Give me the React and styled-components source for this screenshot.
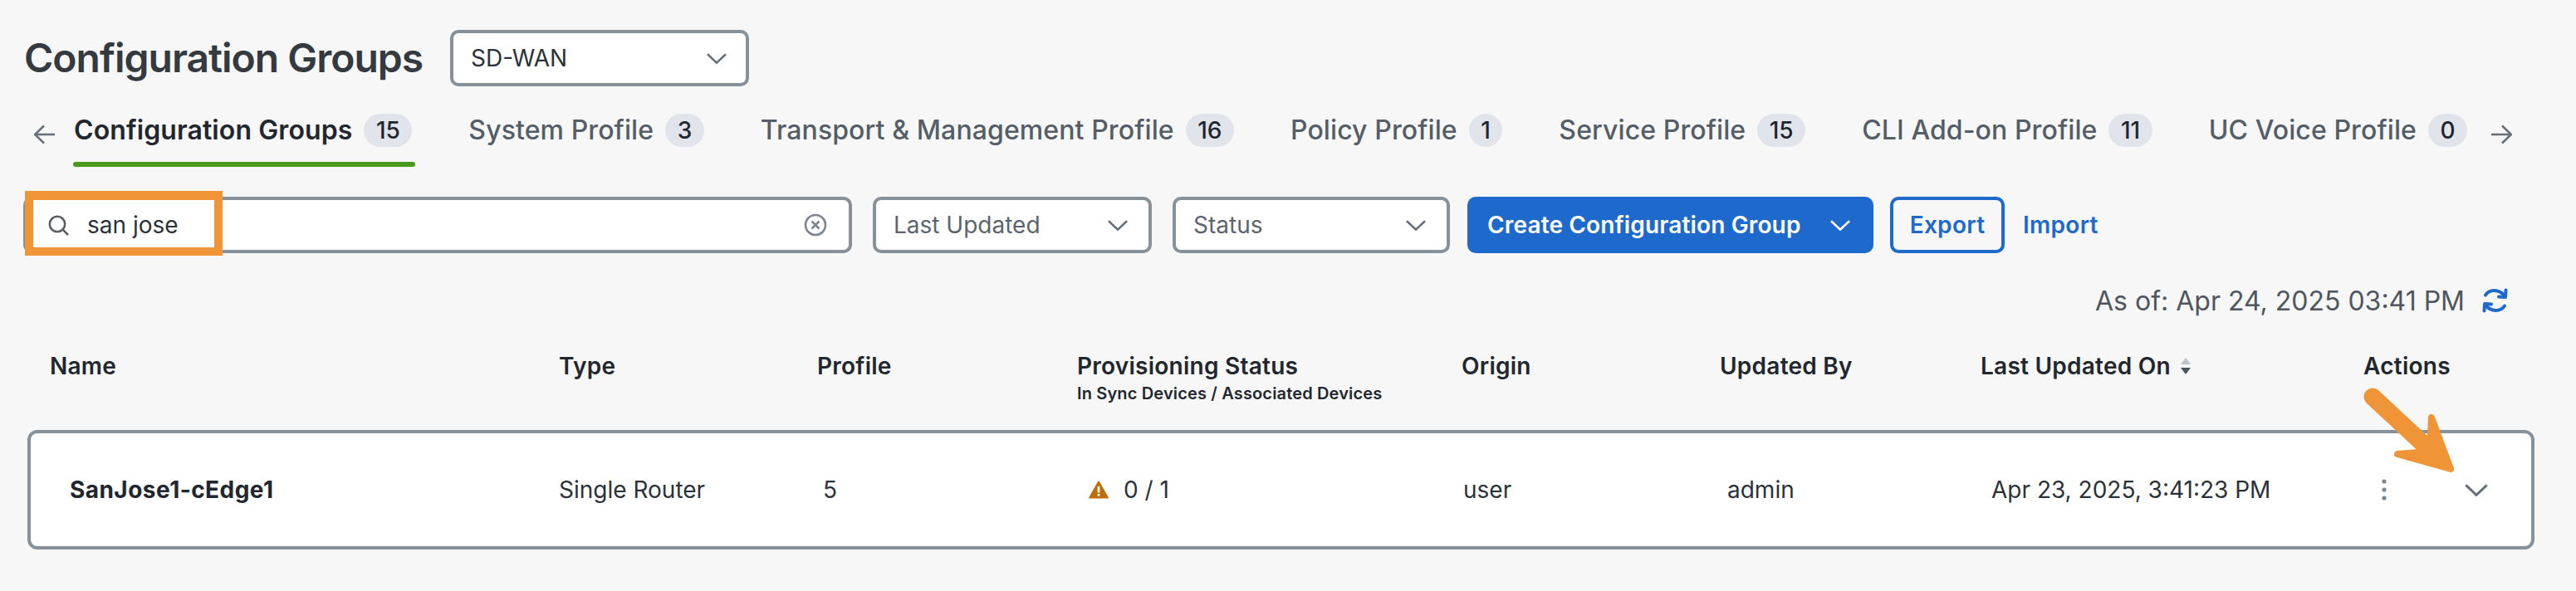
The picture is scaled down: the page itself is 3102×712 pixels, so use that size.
import React from 'react';
import styled, { createGlobalStyle } from 'styled-components';

const GlobalStyle = createGlobalStyle`
  html, body {
    margin: 0;
    padding: 0;
    background: #f7f7f7;
  }
  * {
    box-sizing: border-box;
  }
`;

const BORDER = '#87919a';
const BLUE = '#1d69cc';
const ORANGE = '#f09438';
const COLUMNS = '311px 313px 463px 311px 314px 461px 1fr';

const Page = styled.div`
  position: relative;
  width: 3102px;
  height: 712px;
  overflow: hidden;
  background: #f7f7f7;
  font-family: Inter, "Liberation Sans", sans-serif;
`;

const TitleRow = styled.div`
  display: flex;
  align-items: center;
  height: 68px;
  margin-top: 36px;
  padding-left: 29px;
`;

const Title = styled.h1`
  width: 513px;
  margin: 0;
  font-size: 48px;
  font-weight: 600;
  line-height: 68px;
  letter-spacing: -1px;
  color: #343a40;
`;

const Field = styled.div`
  display: flex;
  align-items: center;
  justify-content: space-between;
  width: ${(p) => p.$width}px;
  height: 68px;
  padding: 0 ${(p) => p.$right || 25}px 0 21px;
  background: #fff;
  border: 4px solid ${BORDER};
  border-radius: 10px;
  font-size: 28px;
  color: ${(p) => p.$muted ? '#5c646e' : '#2c3239'};
`;

const TabsRow = styled.div`
  display: flex;
  align-items: flex-start;
  height: 64px;
  margin-top: 33px;
  padding-left: 41px;
`;

const TabArrow = styled.svg`
  flex: none;
  width: 26px;
  height: 24px;
  margin-top: 13px;
  margin-left: ${(p) => p.$after || 0}px;
  margin-right: ${(p) => p.$before || 0}px;
`;

const Tab = styled.div`
  position: relative;
  display: flex;
  flex: none;
  align-items: flex-start;
  margin-right: 68px;
  font-size: 32px;
  line-height: 40px;
  font-weight: ${(p) => p.$active ? 600 : 500};
  letter-spacing: 0.1px;
  color: ${(p) => p.$active ? '#22262e' : '#545d68'};

  &:last-of-type {
    margin-right: 0;
  }

  ${(p) => p.$active && `
    &::after {
      content: "";
      position: absolute;
      left: -1px;
      right: -4px;
      top: 58px;
      height: 6px;
      border-radius: 3px;
      background: #4a9a1e;
    }
  `}
`;

const Badge = styled.span`
  display: flex;
  align-items: center;
  justify-content: center;
  height: 40px;
  margin-left: 14px;
  padding: 0 14.5px;
  border-radius: 20px;
  background: #e1e4ea;
  font-size: 28px;
  font-weight: 500;
  letter-spacing: 0;
  color: #1f2630;
`;

const Toolbar = styled.div`
  display: flex;
  align-items: center;
  height: 68px;
  margin-top: 36px;
  padding-left: 28px;
`;

const SearchField = styled(Field)`
  margin-right: 25px;
  padding: 0 26px 0 26px;
  justify-content: flex-start;
`;

const SearchText = styled.span`
  flex: 1;
  margin-left: 22px;
`;

const ToolbarSelect = styled(Field)`
  margin-right: 25px;
`;

const PrimaryButton = styled.button`
  display: flex;
  align-items: center;
  justify-content: space-between;
  width: 489px;
  height: 68px;
  margin: 0 20px 0 -4px;
  padding: 0 28px 0 24px;
  border: none;
  border-radius: 10px;
  background: ${BLUE};
  color: #fff;
  font: 600 28px Inter, sans-serif;
  letter-spacing: 0.15px;
`;

const OutlineButton = styled.button`
  width: 138px;
  height: 68px;
  margin-right: 22px;
  padding: 0;
  border: 4px solid ${BLUE};
  border-radius: 10px;
  background: transparent;
  color: ${BLUE};
  font: 600 28px Inter, sans-serif;
  letter-spacing: 0.3px;
`;

const TextLink = styled.a`
  color: ${BLUE};
  font-size: 28px;
  font-weight: 600;
  letter-spacing: 0.3px;
`;

const AsOfRow = styled.div`
  display: flex;
  align-items: center;
  justify-content: flex-end;
  gap: 19px;
  height: 34px;
  margin-top: 40px;
  padding-right: 80px;
  font-size: 32px;
  color: #4f5660;
`;

const HeaderGrid = styled.div`
  display: grid;
  grid-template-columns: 640px ${COLUMNS};
  align-items: start;
  height: 139px;
  margin-left: 33px;
  padding-top: 45px;
`;

const HeaderCell = styled.div`
  display: flex;
  flex-direction: column;
  padding-left: ${(p) => p.$inset || 0}px;
  color: #22262e;
  font-size: 28px;
  font-weight: 600;
  line-height: 34px;
  letter-spacing: 0.25px;
`;

const HeaderLabel = styled.span`
  display: flex;
  align-items: center;
  gap: 12px;
`;

const HeaderSub = styled.span`
  margin-top: 4px;
  font-size: 20px;
  line-height: 24px;
  letter-spacing: 0.15px;
  white-space: nowrap;
`;

const Card = styled.div`
  display: grid;
  grid-template-columns: 636px ${COLUMNS};
  align-items: center;
  width: 3019px;
  height: 144px;
  margin-left: 33px;
  background: #fff;
  border: 4px solid ${BORDER};
  border-radius: 12px;
  font-size: 28px;
  color: #2c3239;
`;

const Cell = styled.div`
  display: flex;
  align-items: center;
  padding-left: ${(p) => p.$inset || 0}px;
  font-weight: ${(p) => p.$strong ? 700 : 400};
  color: ${(p) => p.$strong ? '#22262e' : '#2c3239'};
`;

const RowName = styled(Cell)`
  letter-spacing: 0.45px;
`;

const RowActions = styled(Cell)`
  gap: 92px;
`;

const StatusValue = styled.span`
  margin-left: 18px;
`;

const SearchHighlight = styled.div`
  position: absolute;
  left: 30px;
  top: 230px;
  width: 238px;
  height: 78px;
  border: solid ${ORANGE};
  border-width: 11px 10px 10px 10px;
  pointer-events: none;
`;

const PointerArrow = styled.svg`
  position: absolute;
  left: 2840px;
  top: 460px;
  width: 170px;
  height: 150px;
  pointer-events: none;
`;

const Chevron = ({ color = '#66707b', width = 24, height = 13 }) => (
  <svg width={width} height={height} viewBox="0 0 24 13" fill="none">
    <path d="M1 1.2 12 11.6 23 1.2" stroke={color} strokeWidth="2.6" />
  </svg>
);

const ArrowIcon = ({ right, after, before }) => (
  <TabArrow $after={after} $before={before} viewBox="0 0 26 24" fill="none">
    <path
      d={right ? 'M1 12H25M14 1.5 25 12 14 22.5' : 'M25 12H1M12 1.5 1 12 12 22.5'}
      stroke="#66707b"
      strokeWidth="2.6"
    />
  </TabArrow>
);

const SearchIcon = () => (
  <svg width="25" height="25" viewBox="0 0 25 25" fill="none">
    <circle cx="11" cy="11" r="9.2" stroke="#5a5f66" strokeWidth="2.6" />
    <path d="M17.6 17.6 24 24" stroke="#5a5f66" strokeWidth="2.6" />
  </svg>
);

const ClearIcon = () => (
  <svg width="28" height="28" viewBox="0 0 28 28" fill="none">
    <circle cx="14" cy="14" r="12" stroke="#7b8691" strokeWidth="2.6" />
    <path d="M9.5 9.5 18.5 18.5M18.5 9.5 9.5 18.5" stroke="#7b8691" strokeWidth="2.6" />
  </svg>
);

const RefreshIcon = () => (
  <svg width="35" height="32" viewBox="0 0 35 32" fill="none" stroke={BLUE} strokeWidth="4" strokeLinecap="round" strokeLinejoin="round">
    <path d="M6 9.5C10 3 22 1 29.5 11" />
    <path d="M30.5 3.5 30 12 22 11.5" />
    <path d="M29 22.5C25 29 13 31 5.5 21" />
    <path d="M4.5 28.5 5 20 13 20.5" />
  </svg>
);

const WarningIcon = () => (
  <svg width="24" height="22" viewBox="0 0 24 22">
    <path d="M12 1.5 22.8 20.5H1.2Z" fill="#bd6f0c" stroke="#bd6f0c" strokeWidth="2" strokeLinejoin="round" />
    <rect x="10.7" y="7" width="2.6" height="7.5" fill="#fff" />
    <rect x="10.7" y="16" width="2.6" height="2.6" fill="#fff" />
  </svg>
);

const SortIcon = () => (
  <svg width="12" height="22" viewBox="0 0 12 22">
    <path d="M6 1 12 9H0Z" fill="#bcc2cb" />
    <path d="M6 21 0 13H12Z" fill="#4b545e" />
  </svg>
);

const KebabIcon = () => (
  <svg width="10" height="26" viewBox="0 0 10 26" fill="#7b8691">
    <circle cx="5" cy="3" r="2.6" />
    <circle cx="5" cy="13" r="2.6" />
    <circle cx="5" cy="23" r="2.6" />
  </svg>
);

const tabs = [
  { label: 'Configuration Groups', count: 15, active: true },
  { label: 'System Profile', count: 3 },
  { label: 'Transport & Management Profile', count: 16 },
  { label: 'Policy Profile', count: 1 },
  { label: 'Service Profile', count: 15 },
  { label: 'CLI Add-on Profile', count: 11 },
  { label: 'UC Voice Profile', count: 0 },
];

const App = () => (
  <Page>
    <GlobalStyle />
    <TitleRow>
      <Title>Configuration Groups</Title>
      <Field $width={360} $right={23}>
        SD-WAN
        <Chevron />
      </Field>
    </TitleRow>

    <TabsRow>
      <ArrowIcon before={22} />
      {tabs.map((tab) => (
        <Tab key={tab.label} $active={tab.active}>
          {tab.label}
          <Badge>{tab.count}</Badge>
        </Tab>
      ))}
      <ArrowIcon right after={28} />
    </TabsRow>

    <Toolbar>
      <SearchField $width={998}>
        <SearchIcon />
        <SearchText>san jose</SearchText>
        <ClearIcon />
      </SearchField>
      <ToolbarSelect $width={336} $muted>
        Last Updated
        <Chevron />
      </ToolbarSelect>
      <ToolbarSelect $width={334} $muted>
        Status
        <Chevron />
      </ToolbarSelect>
      <PrimaryButton>
        Create Configuration Group
        <Chevron color="#fff" />
      </PrimaryButton>
      <OutlineButton>Export</OutlineButton>
      <TextLink>Import</TextLink>
    </Toolbar>

    <AsOfRow>
      As of: Apr 24, 2025 03:41 PM
      <RefreshIcon />
    </AsOfRow>

    <HeaderGrid>
      <HeaderCell $inset={27}>Name</HeaderCell>
      <HeaderCell>Type</HeaderCell>
      <HeaderCell>Profile</HeaderCell>
      <HeaderCell>
        Provisioning Status
        <HeaderSub>In Sync Devices / Associated Devices</HeaderSub>
      </HeaderCell>
      <HeaderCell>Origin</HeaderCell>
      <HeaderCell>Updated By</HeaderCell>
      <HeaderCell>
        <HeaderLabel>
          Last Updated On
          <SortIcon />
        </HeaderLabel>
      </HeaderCell>
      <HeaderCell>Actions</HeaderCell>
    </HeaderGrid>

    <Card>
      <RowName $inset={47} $strong>SanJose1-cEdge1</RowName>
      <Cell>Single Router</Cell>
      <Cell $inset={7}>5</Cell>
      <Cell $inset={14}>
        <WarningIcon />
        <StatusValue>0 / 1</StatusValue>
      </Cell>
      <Cell $inset={2}>user</Cell>
      <Cell $inset={9}>admin</Cell>
      <Cell $inset={13}>Apr 23, 2025, 3:41:23 PM</Cell>
      <RowActions $inset={20}>
        <KebabIcon />
        <Chevron width={28} height={15} />
      </RowActions>
    </Card>

    <SearchHighlight />
    <PointerArrow viewBox="0 0 170 150" fill={ORANGE}>
      <path d="M17 18 88 84" stroke={ORANGE} strokeWidth="21" strokeLinecap="round" />
      <path d="M88 43 111 105 47 87 86 84Z" stroke={ORANGE} strokeWidth="8" strokeLinejoin="round" />
    </PointerArrow>
  </Page>
);

export default App;
